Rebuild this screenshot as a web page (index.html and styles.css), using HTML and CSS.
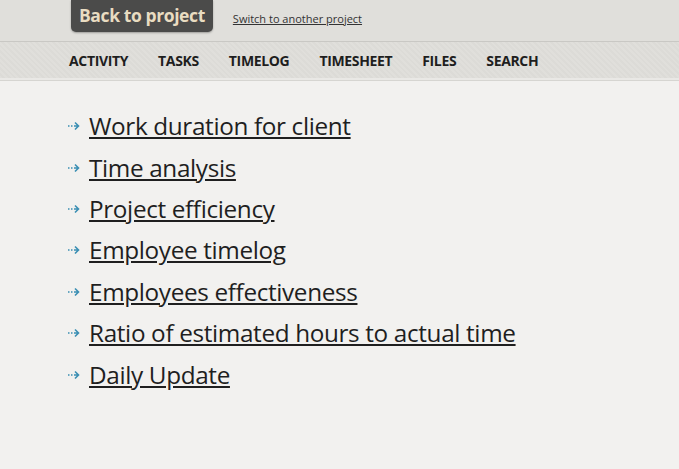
FILE: index.html
```html
<!DOCTYPE html>
<html lang="en">

<head>
  <meta charset="UTF-8">
  <title>Reports</title>
  <link rel="stylesheet" href="styles.css">
</head>

<body>
  <div class="top">
    <a class="backBtn" href="#">Back to project</a>
    <a class="switch" href="#">Switch to another project</a>
  </div>

  <div class="nav">
    <a href="#">Activity</a>
    <a href="#">Tasks</a>
    <a href="#">Timelog</a>
    <a href="#">Timesheet</a>
    <a href="#">Files</a>
    <a href="#">Search</a>
  </div>

  <ul class="reports">
    <li><svg class="arrow" viewBox="0 0 12 10"><path d="M0 5h1.5M3 5h1.5M6 5h4.5M7 1.5l3.5 3.5-3.5 3.5"/></svg><a href="#">Work duration for client</a></li>
    <li><svg class="arrow" viewBox="0 0 12 10"><path d="M0 5h1.5M3 5h1.5M6 5h4.5M7 1.5l3.5 3.5-3.5 3.5"/></svg><a href="#">Time analysis</a></li>
    <li><svg class="arrow" viewBox="0 0 12 10"><path d="M0 5h1.5M3 5h1.5M6 5h4.5M7 1.5l3.5 3.5-3.5 3.5"/></svg><a href="#">Project efficiency</a></li>
    <li><svg class="arrow" viewBox="0 0 12 10"><path d="M0 5h1.5M3 5h1.5M6 5h4.5M7 1.5l3.5 3.5-3.5 3.5"/></svg><a href="#">Employee timelog</a></li>
    <li><svg class="arrow" viewBox="0 0 12 10"><path d="M0 5h1.5M3 5h1.5M6 5h4.5M7 1.5l3.5 3.5-3.5 3.5"/></svg><a href="#">Employees effectiveness</a></li>
    <li><svg class="arrow" viewBox="0 0 12 10"><path d="M0 5h1.5M3 5h1.5M6 5h4.5M7 1.5l3.5 3.5-3.5 3.5"/></svg><a href="#">Ratio of estimated hours to actual time</a></li>
    <li><svg class="arrow" viewBox="0 0 12 10"><path d="M0 5h1.5M3 5h1.5M6 5h4.5M7 1.5l3.5 3.5-3.5 3.5"/></svg><a href="#">Daily Update</a></li>
  </ul>
</body>

</html>
```

FILE: styles.css
```css
body {
  margin: 0;
  background: #f2f1ef;
  font-family: "Open Sans", "Noto Sans", sans-serif;
  color: #222;
}

.top {
  height: 41px;
  background: #e0dfdb;
  display: flex;
  align-items: flex-start;
  padding-left: 71px;
}

.backBtn {
  display: block;
  height: 32px;
  line-height: 31px;
  padding: 0 8px;
  white-space: nowrap;
  background: #4b4b4a;
  color: #e9dcc1;
  font-size: 17.5px;
  font-weight: bold;
  text-decoration: none;
  border-radius: 0 0 5px 5px;
  box-shadow: 0 1px 2px rgba(0, 0, 0, 0.3);
  letter-spacing: -0.4px;
}

.switch {
  margin: 11px 0 0 20px;
  font-size: 11px;
  color: #333;
}

.nav {
  height: 36px;
  border-top: 1px solid #c9c8c4;
  border-bottom: 2px solid #e9e8e5;
  box-shadow: 0 1px 0 #d6d5d1;
  background: repeating-linear-gradient(45deg, #e0dfdb 0, #e0dfdb 2px, #dcdbd7 2px, #dcdbd7 4px);
  display: flex;
  align-items: center;
  gap: 30px;
  padding-left: 69px;
}

.nav a {
  font-size: 14px;
  font-weight: bold;
  text-transform: uppercase;
  text-decoration: none;
  color: #1e1e1e;
  letter-spacing: -0.35px;
}

.reports {
  list-style: none;
  margin: 0;
  padding: 25px 0 0 68px;
}

.reports li {
  height: 41.4px;
  display: flex;
  align-items: center;
}

.arrow {
  width: 12px;
  height: 10px;
  margin: 1px 9px 0 0;
  fill: none;
  stroke: #3b8fb3;
  stroke-width: 1.6;
}

.reports a {
  font-size: 24.3px;
  color: #1f1f1f;
  letter-spacing: -0.35px;
}
```
